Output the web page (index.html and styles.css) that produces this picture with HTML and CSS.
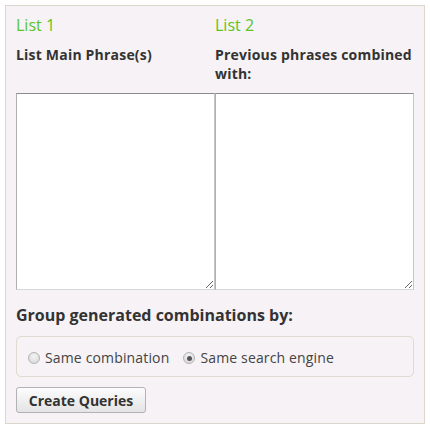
FILE: index.html
```html
<!DOCTYPE html>
<html>
<head>
<meta charset="utf-8">
<link rel="stylesheet" href="styles.css">
</head>
<body>
<div class="panel">
  <div class="lists">
    <h3 class="list-title">List 1</h3>
    <h3 class="list-title">List 2</h3>
    <label class="list-label">List Main Phrase(s)</label>
    <label class="list-label">Previous phrases combined with:</label>
    <textarea class="list-box"></textarea>
    <textarea class="list-box"></textarea>
  </div>
  <h4 class="group-title">Group generated combinations by:</h4>
  <div class="group-box">
    <label class="opt"><input type="radio" name="g" class="radio"> Same combination</label>
    <label class="opt"><input type="radio" name="g" class="radio" checked> Same search engine</label>
  </div>
  <button class="btn">Create Queries</button>
</div>
</body>
</html>
```
FILE: styles.css
```css
html, body { margin: 0; padding: 0; background: #fff; }
body { font-family: "Open Sans", "Liberation Sans", sans-serif; color: #333; }
.panel {
  margin: 5px 0 0 5px;
  width: 398px;
  height: 400px;
  padding: 8px 10px 9px 10px;
  background: #f6f2f5;
  border: 1px solid #ddd6cc;
}
.lists {
  display: grid;
  grid-template-columns: 199px 199px;
  align-items: start;
}
.list-title {
  margin: 0;
  font-size: 16px;
  font-weight: 400;
  line-height: 22px;
  color: #5cc524;
}
.list-label {
  margin-top: 9px;
  font-size: 14px;
  font-weight: 700;
  line-height: 19px;
  letter-spacing: 0.2px;
  color: #333;
}
.list-box {
  grid-row: 3;
  margin: 10px 0 0 0;
  box-sizing: border-box;
  width: 199px;
  height: 197px;
  background: #fff;
  border: 1px solid;
  border-color: #8c8c8c #c6c6c6 #d6d6d6 #b0b0b0;
  padding: 2px;
  font-family: inherit;
}
.group-title {
  margin: 14px 0 0 0;
  font-size: 16px;
  font-weight: 700;
  line-height: 22px;
  color: #333;
}
.group-box {
  margin-top: 10px;
  box-sizing: border-box;
  height: 41px;
  border: 1px solid #e2dad0;
  border-radius: 5px;
  padding: 0 10px 0 11px;
  display: flex;
  align-items: center;
  gap: 14px;
  background: #f6f2f5;
}
.opt {
  display: flex;
  align-items: center;
  font-size: 14px;
  letter-spacing: 0.15px;
  color: #444;
  line-height: 20px;
  margin-top: 3px;
}
.radio {
  appearance: none;
  -webkit-appearance: none;
  width: 12px;
  height: 12px;
  margin: 0 5px 0 0;
  border-radius: 50%;
  border: 1px solid #b4b4b4;
  background: radial-gradient(circle at 50% 35%, #f4f4f4, #d4d4d4);
  position: relative;
}
.radio:checked::after {
  content: "";
  position: absolute;
  left: 2.5px;
  top: 2.5px;
  width: 5px;
  height: 5px;
  border-radius: 50%;
  background: #555;
}
.btn {
  margin-top: 10px;
  width: 130px;
  height: 26px;
  border: 1px solid #b2b2b2;
  border-radius: 3px;
  background: linear-gradient(#fcfcfc, #e4e4e4);
  font-family: inherit;
  font-size: 14px;
  font-weight: 700;
  color: #333;
  padding: 0;
}
```
